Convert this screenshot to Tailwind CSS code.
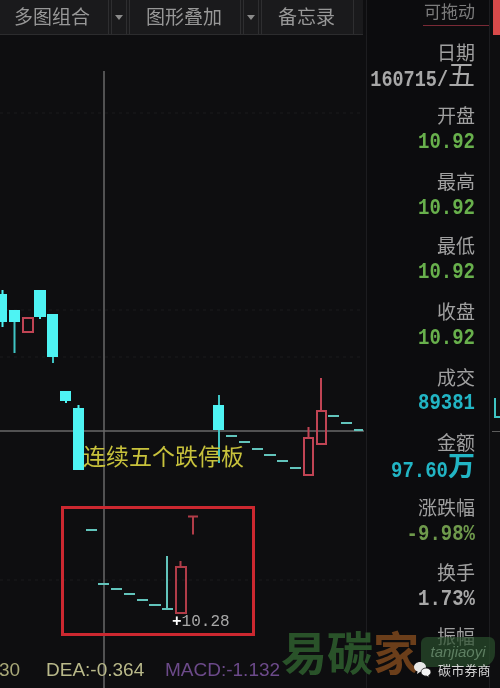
<!DOCTYPE html>
<html lang="zh-CN">
<head>
  <meta charset="UTF-8" />
  <title>K线图</title>
  <script src="https://cdn.jsdelivr.net/npm/@tailwindcss/browser@4"></script>
</head>
<body class="bg-[#0e0e10]">
  <div class="relative flex w-[500px] h-[688px] overflow-hidden bg-[#0e0e10] font-['Noto_Sans_CJK_SC','Noto_Sans',sans-serif] blur-[0.4px]">

    <!-- chart column -->
    <div class="relative w-[366px] h-full flex flex-col">
      <div class="flex h-[35px] w-[363px] shrink-0 gap-[2px] bg-[#1a1a1c] border-b border-[#2c2c2e] text-[19px] leading-[32px] text-[#989898]">
        <div class="w-[109px] pl-[14px] border-r border-[#2e2e30]">多图组合</div>
        <div class="w-[16px] flex items-center justify-center border-x border-[#2e2e30]"><span class="w-0 h-0 border-x-[4px] border-x-transparent border-t-[5px] border-t-[#8a8a8a]"></span></div>
        <div class="w-[112px] pl-[16px] border-x border-[#2e2e30]">图形叠加</div>
        <div class="w-[16px] flex items-center justify-center border-x border-[#2e2e30]"><span class="w-0 h-0 border-x-[4px] border-x-transparent border-t-[5px] border-t-[#8a8a8a]"></span></div>
        <div class="w-[93px] pl-[16px] border-x border-[#2e2e30]">备忘录</div>
      </div>

      <svg class="block w-[366px] flex-1" viewBox="0 35 366 653" xmlns="http://www.w3.org/2000/svg">
        <!-- faint grid -->
        <g stroke="#1a1a1c" stroke-width="1" stroke-dasharray="3 4">
          <line x1="0" y1="113" x2="363" y2="113"/>
          <line x1="0" y1="310" x2="363" y2="310"/>
          <line x1="0" y1="357" x2="363" y2="357"/>
          <line x1="0" y1="580" x2="363" y2="580"/>
        </g>
        <!-- crosshair -->
        <line x1="104" y1="71" x2="104" y2="688" stroke="#686868" stroke-width="1.5"/>
        <line x1="0" y1="431" x2="364" y2="431" stroke="#686868" stroke-width="1.5"/>

        <!-- falling candles -->
        <g fill="#4ef3f3">
          <rect x="1.5" y="290" width="2" height="37"/><rect x="0" y="294" width="7" height="28"/>
          <rect x="13.5" y="310" width="2" height="43" fill="#3fc4c4"/><rect x="9" y="310" width="11" height="12"/>
          <rect x="39" y="290" width="2" height="29"/><rect x="34" y="290" width="12" height="27"/>
          <rect x="52" y="314" width="2" height="49" fill="#3fc4c4"/><rect x="47" y="314" width="11" height="43"/>
          <rect x="65" y="391" width="2" height="12"/><rect x="60" y="391" width="11" height="10"/>
          <rect x="77.500" y="405" width="2" height="10"/><rect x="73" y="408" width="11" height="62"/>
          <rect x="218" y="395" width="2" height="68" fill="#3fc4c4"/><rect x="213" y="405" width="11" height="25"/>
        </g>

        <!-- rising candles -->
        <g fill="none" stroke="#c04454" stroke-width="2">
          <rect x="23" y="318" width="10" height="14"/>
          <rect x="304" y="438" width="9" height="37"/>
          <line x1="308.500" y1="427" x2="308.500" y2="438"/>
          <rect x="317" y="411" width="9" height="33"/>
          <line x1="321" y1="378" x2="321" y2="411"/>
        </g>

        <!-- limit down dashes -->
        <g stroke="#62c4bc" stroke-width="2">
          <line x1="226" y1="436" x2="237" y2="436"/>
          <line x1="239" y1="442" x2="250" y2="442"/>
          <line x1="252" y1="449" x2="263" y2="449"/>
          <line x1="264" y1="455" x2="276" y2="455"/>
          <line x1="277" y1="461" x2="288" y2="461"/>
          <line x1="290" y1="468" x2="301" y2="468"/>
          <line x1="328" y1="416" x2="339" y2="416"/>
          <line x1="341" y1="423" x2="352" y2="423"/>
          <line x1="354" y1="430" x2="363" y2="430"/>
          <line x1="86" y1="530" x2="97" y2="530"/>
          <line x1="98" y1="584" x2="109" y2="584"/>
          <line x1="111" y1="589" x2="122" y2="589"/>
          <line x1="124" y1="594" x2="135" y2="594"/>
          <line x1="137" y1="600" x2="148" y2="600"/>
          <line x1="149" y1="605" x2="161" y2="605"/>
          <line x1="162" y1="609" x2="173" y2="609"/>
          <line x1="167" y1="556" x2="167" y2="609"/>
        </g>

        <!-- annotation box -->
        <rect x="62.500" y="507.500" width="191" height="127" fill="none" stroke="#cc2830" stroke-width="3"/>
        <g fill="none" stroke="#b03c48" stroke-width="2">
          <path d="M188 516.500h10M193 516.500v18"/>
          <rect x="176" y="567" width="10" height="46"/>
          <line x1="180.500" y1="561" x2="180.500" y2="567"/>
        </g>
      </svg>

      <!-- text over the chart -->
      <div class="absolute left-[83px] top-[438px] text-[23px] leading-[34px] whitespace-nowrap text-[#c8c23c]">连续五个跌停板</div>
      <div class="absolute left-[172px] top-[613px] text-[16px] leading-[18px] whitespace-nowrap text-[#a8a8a8] font-['Liberation_Mono',monospace]"><span class="font-bold text-white">+</span>10.28</div>
      <div class="absolute left-0 right-0 top-[657px] h-[26px] text-[19px] leading-[26px] whitespace-nowrap font-['Liberation_Sans',sans-serif]">
        <span class="absolute left-[-1px] text-[#a8a878]">30</span>
        <span class="absolute left-[46px] text-[#b9b98a]">DEA:-0.364</span>
        <span class="absolute left-[165px] text-[#6c4a8a]">MACD:-1.132</span>
      </div>
    </div>

    <!-- quote panel -->
    <div class="w-[124px] h-full shrink-0 bg-[#0c0c0e] border-x border-[#1d1d20] flex flex-col items-end pr-[14px] text-[#a0a0a0] text-[19px] font-['Noto_Sans_CJK_SC',sans-serif]">
      <div class="h-[26px] -mr-[14px] pr-[14px] w-[66px] self-end border-b border-[#7a2a36] text-[17px] leading-[21px] text-[#7c7c7c] text-right whitespace-nowrap">可拖动</div>
      <div class="mt-[12px] h-[27px] leading-[27px]">日期</div>
      <div class="h-[27px] leading-[27px] whitespace-nowrap text-[#a8a8a8] font-bold font-['Liberation_Mono','Noto_Sans_CJK_SC',monospace] text-[18.5px]"><span class="inline-block scale-y-[1.2]">160715/</span><span class="text-[27px] font-normal">五</span></div>
      <div class="mt-[9px] h-[27px] leading-[27px]">开盘</div>
      <div class="h-[28px] leading-[28px] font-bold text-[#68b04c] font-['Liberation_Mono',monospace] text-[19px]"><span class="inline-block scale-y-[1.2]">10.92</span></div>
      <div class="mt-[11px] h-[27px] leading-[27px]">最高</div>
      <div class="h-[28px] leading-[28px] font-bold text-[#68b04c] font-['Liberation_Mono',monospace] text-[19px]"><span class="inline-block scale-y-[1.2]">10.92</span></div>
      <div class="mt-[9px] h-[27px] leading-[27px]">最低</div>
      <div class="h-[28px] leading-[28px] font-bold text-[#68b04c] font-['Liberation_Mono',monospace] text-[19px]"><span class="inline-block scale-y-[1.2]">10.92</span></div>
      <div class="mt-[11px] h-[27px] leading-[27px]">收盘</div>
      <div class="h-[28px] leading-[28px] font-bold text-[#68b04c] font-['Liberation_Mono',monospace] text-[19px]"><span class="inline-block scale-y-[1.2]">10.92</span></div>
      <div class="mt-[11px] h-[27px] leading-[27px]">成交</div>
      <div class="h-[27px] leading-[27px] font-bold text-[#22b5c4] font-['Liberation_Mono',monospace] text-[19px]"><span class="inline-block scale-y-[1.2]">89381</span></div>
      <div class="mt-[11px] h-[27px] leading-[27px]">金额</div>
      <div class="h-[28px] leading-[28px] whitespace-nowrap font-bold text-[#22b5c4] font-['Liberation_Mono','Noto_Sans_CJK_SC',monospace] text-[19px]"><span class="inline-block scale-y-[1.2]">97.60</span><span class="text-[27px]">万</span></div>
      <div class="mt-[10px] h-[27px] leading-[27px]">涨跌幅</div>
      <div class="h-[28px] leading-[28px] font-bold text-[#6f9a4c] font-['Liberation_Mono',monospace] text-[19px]"><span class="inline-block scale-y-[1.2]">-9.98%</span></div>
      <div class="mt-[10px] h-[27px] leading-[27px]">换手</div>
      <div class="h-[28px] leading-[28px] font-bold text-[#a8a8a8] font-['Liberation_Mono',monospace] text-[19px]"><span class="inline-block scale-y-[1.2]">1.73%</span></div>
      <div class="mt-[9px] h-[27px] leading-[27px]">振幅</div>
    </div>

    <!-- right edge -->
    <div class="relative flex-1 h-full">
      <div class="absolute left-[3px] top-0 w-[7px] h-[35px] bg-[#d84a4a]"></div>
      <div class="absolute left-[4px] top-[398px] w-[2px] h-[19px] bg-[#3fc4c4]"></div>
      <div class="absolute left-[4px] top-[416px] w-[6px] h-[2px] bg-[#3fc4c4]"></div>
      <div class="absolute left-[2px] top-[431px] w-[8px] h-[1px] bg-[#5c5c5c]"></div>
    </div>

    <!-- watermark -->
    <div class="absolute left-[281px] top-[620px] flex items-center h-[60px] font-bold text-[46px] leading-[60px] whitespace-nowrap text-[#2c5a2c]/90">
      <span>易碳</span><span class="text-[#6b3e1a]">家</span>
    </div>
    <div class="absolute left-[421px] top-[637px] w-[74px] h-[30px] rounded-[6px] rounded-br-[14px] bg-[#2a4f2c]/70 text-[15px] leading-[30px] italic text-center text-[#5e7f62] font-['Liberation_Sans',sans-serif]">tanjiaoyi</div>
    <svg class="absolute left-[413px] top-[661px] w-[20px] h-[18px]" viewBox="0 0 20 18" xmlns="http://www.w3.org/2000/svg">
      <path d="M7 1c3.300 0 6 2.200 6 5 0 2.800-2.700 5-6 5l-3 2 .6-2.600C2.400 9.600 1 8 1 6c0-2.800 2.700-5 6-5z" fill="#e8e8e8"/>
      <path d="M13 7c2.800 0 5 1.800 5 4.100 0 1.500-1 2.800-2.400 3.500l.5 2-2.400-1.500c-3.100.3-5.700-1.600-5.700-4 0-2.300 2.200-4.100 5-4.100z" fill="#f4f4f4" stroke="#111" stroke-width="0.8"/>
    </svg>
    <div class="absolute left-[438px] top-[661px] text-[13px] leading-[18px] tracking-[0.2px] whitespace-nowrap text-[#d6d6d6]">碳市券商</div>
  </div>
</body>
</html>
